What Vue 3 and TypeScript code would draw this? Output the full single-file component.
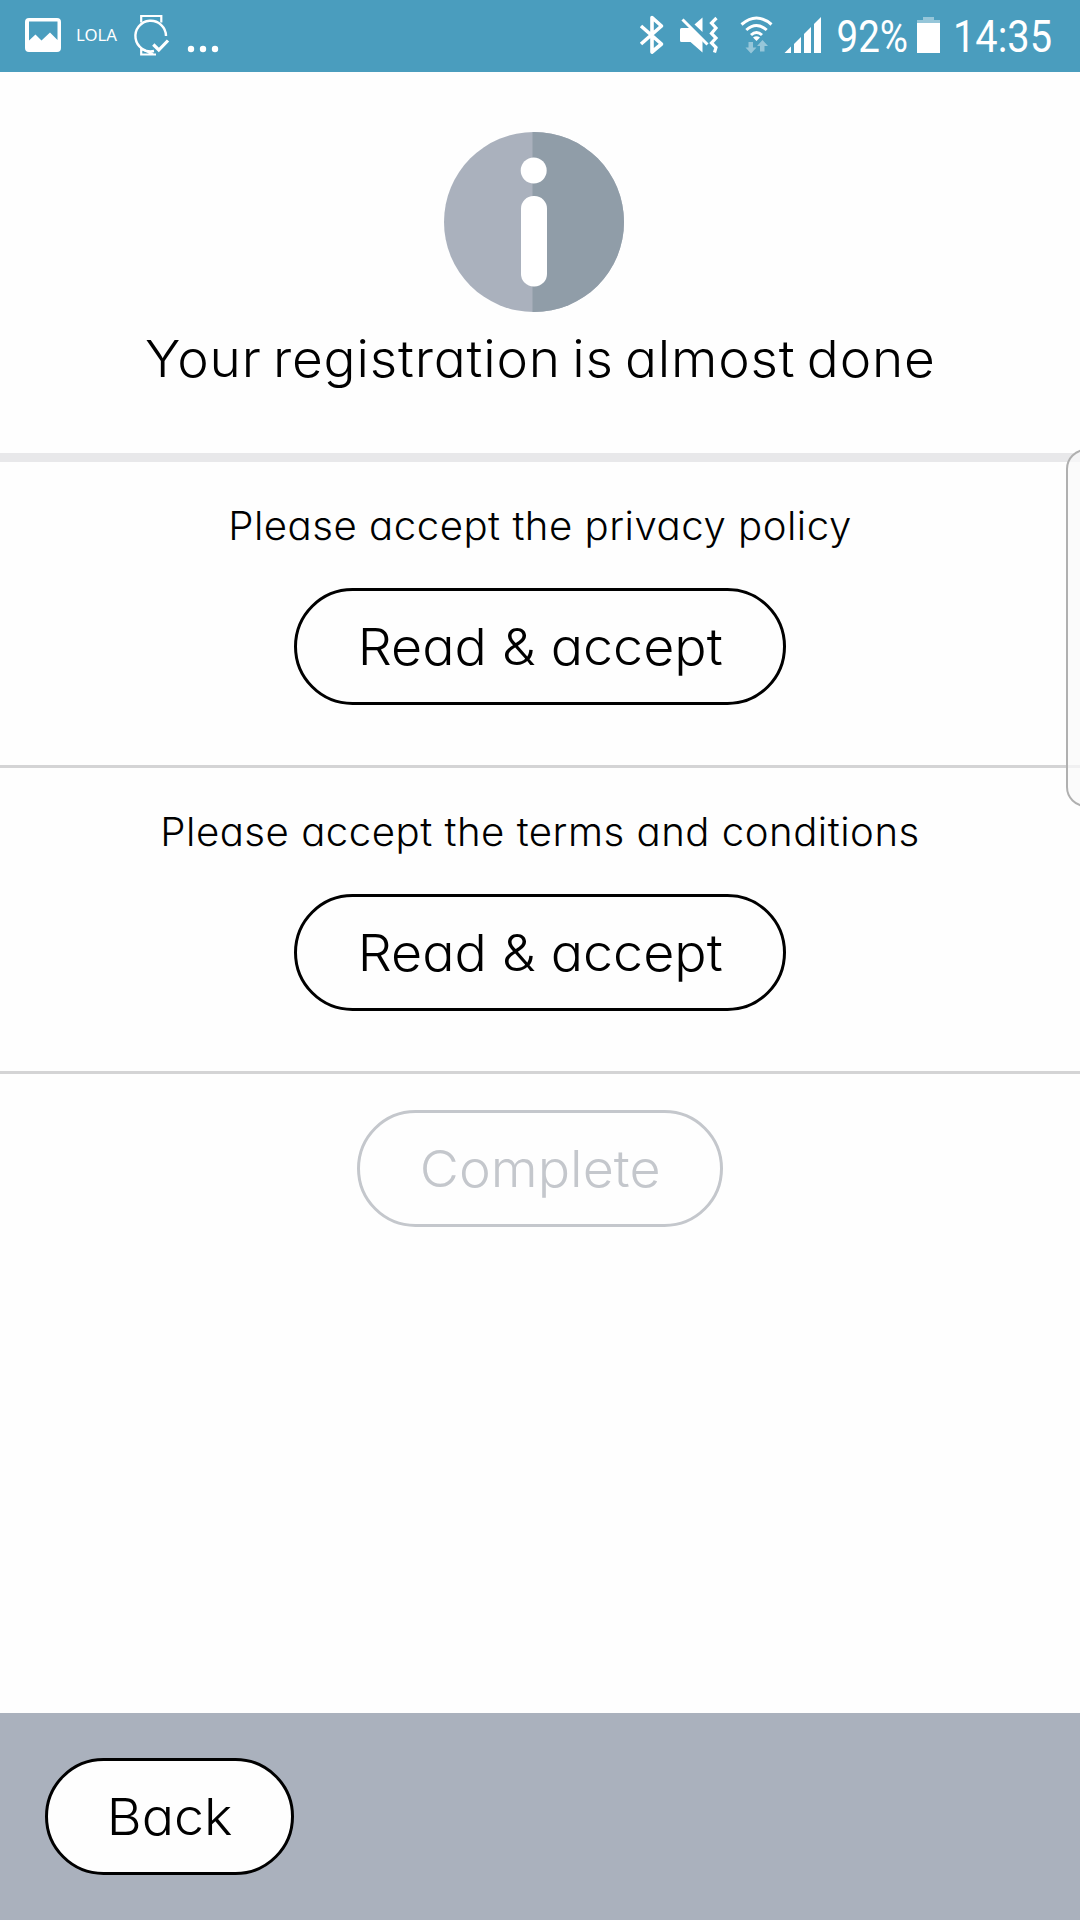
<script setup lang="ts">
interface Consent {
  id: string
  label: string
}

const consents: Consent[] = [
  { id: 'privacy', label: 'Please accept the privacy policy' },
  { id: 'terms', label: 'Please accept the terms and conditions' },
]
</script>

<template>
  <div class="screen">
    <header class="status">
      <svg class="status-left" width="240" height="72" viewBox="0 0 240 72">
        <path
          fill="#fff"
          fill-rule="evenodd"
          d="M29 18H57a4 4 0 0 1 4 4V48a4 4 0 0 1-4 4H29a4 4 0 0 1-4-4V22a4 4 0 0 1 4-4ZM29 21.5V40.5L35.500 34.500L41.500 40.500L50 32.500L57.500 40V21.500Z"
        />
        <text x="76" y="41" class="lola" textLength="41" lengthAdjust="spacingAndGlyphs">LOLA</text>
        <g fill="none" stroke="#fff" stroke-width="2.200">
          <path d="M141.200 22.500V16H161.300V22.500" />
          <path d="M141.200 48V54.500H156M141.200 49L153 54" />
          <path d="M154 51A15.300 15.300 0 1 1 166 36" stroke-width="2.400" />
          <path d="M153.300 44.500L158.800 50L168 40.500" stroke-width="3.200" />
        </g>
        <g fill="#fff">
          <circle cx="191" cy="49" r="3.200" />
          <circle cx="203" cy="49" r="3.200" />
          <circle cx="215" cy="49" r="3.200" />
        </g>
      </svg>
      <svg class="status-right" width="460" height="72" viewBox="620 0 460 72">
        <path
          d="M641 26L661.500 44L652 52V17.500L661.500 26L641 44"
          fill="none"
          stroke="#fff"
          stroke-width="3.600"
          stroke-linejoin="round"
        />
        <g fill="#fff">
          <path d="M681.500 28H690L702.500 40V52.500L690.500 42H681.500a1.500 1.500 0 0 1-1.500-1.500V29.500a1.500 1.500 0 0 1 1.500-1.500Z" />
          <path d="M694.500 24.500L702.500 17.500V32Z" />
        </g>
        <path d="M682.500 19.500L707.500 44.500" stroke="#fff" stroke-width="3" />
        <path
          d="M716.500 18L711.500 23L716 28L711.500 33.500L716 38L711.500 43L716 47.500L714.500 52.500"
          fill="none"
          stroke="#fff"
          stroke-width="3.200"
        />
        <g fill="none" stroke="#fff" stroke-width="3">
          <path d="M741.500 24.500Q756.500 11.500 771.500 24.500" />
          <path d="M746.300 30Q756.500 21 766.700 30" />
          <path d="M751 35Q756.500 30 762 35" />
        </g>
        <path d="M753 37.500Q756.500 35 760 37.500L756.500 41Z" fill="#fff" />
        <g fill="#fff" opacity=".42">
          <path d="M748.500 42H753V47.500H756.500L751 53.500L745.500 47.500H748.500Z" />
          <path d="M760 51.500H764.500V46H768L762.500 40L757 46H760Z" />
        </g>
        <g fill="#fff">
          <path d="M784.500 53L791 46.500V53Z" />
          <path d="M794 53V44L801 37V53Z" />
          <path d="M804 53V34L811 27V53Z" />
          <path d="M814 53V24L821 17V53Z" />
        </g>
        <text x="836.500" y="52" class="digits" textLength="71.500" lengthAdjust="spacingAndGlyphs">92%</text>
        <path d="M923 17H934V20H940V23H917V20H923Z" fill="#fff" opacity=".42" />
        <path d="M917 23H940V53H917Z" fill="#fff" />
        <text x="953" y="52" class="digits" textLength="99" lengthAdjust="spacingAndGlyphs">14:35</text>
      </svg>
    </header>

    <section class="hero">
      <svg class="info" width="180" height="180" viewBox="0 0 180 180">
        <circle cx="90" cy="90" r="90" fill="#aab1bd" />
        <path d="M88.500 0H90A90 90 0 0 1 90 180H88.500Z" fill="#909da8" />
        <circle cx="89.700" cy="38.500" r="13" fill="#fff" />
        <rect x="77" y="64" width="26" height="90.500" rx="12.500" fill="#fff" />
      </svg>
      <h1>Your registration is almost done</h1>
    </section>

    <section v-for="item in consents" :key="item.id" class="consent">
      <p :class="item.id">{{ item.label }}</p>
      <button class="pill read" type="button"><span>Read &amp; accept</span></button>
    </section>

    <section class="finish">
      <button class="pill complete" type="button" disabled><span>Complete</span></button>
    </section>

    <footer>
      <button class="pill back" type="button"><span>Back</span></button>
    </footer>

    <div class="edge-handle"></div>
  </div>
</template>

<style>
body {
  margin: 0;
}
</style>

<style scoped>
.screen {
  position: relative;
  display: flex;
  flex-direction: column;
  width: 1080px;
  height: 1920px;
  overflow: hidden;
  background: #fefefe;
  color: #000;
  font-family: Inter, "Liberation Sans", sans-serif;
  font-weight: 270;
  font-feature-settings: "cv11" 1;
}

.status {
  display: flex;
  justify-content: space-between;
  flex: none;
  height: 72px;
  background: #4a9dbe;
}

.lola {
  font: 400 17px "Noto Sans", sans-serif;
  fill: #fff;
}

.digits {
  font: 400 45px Roboto, sans-serif;
  fill: #fff;
}

.hero {
  box-sizing: border-box;
  display: flex;
  flex-direction: column;
  align-items: center;
  flex: none;
  height: 390px;
  padding-top: 60px;
  border-bottom: 9px solid #e8e8ea;
}

.info {
  flex: none;
  margin-right: 12px;
}

h1 {
  margin: 17px 0 0;
  font-size: 51px;
  font-weight: inherit;
  line-height: 60px;
  letter-spacing: 0.8px;
  word-spacing: -4.300px;
  white-space: nowrap;
  transform: scaleX(1.042);
}

.consent {
  box-sizing: border-box;
  display: flex;
  flex-direction: column;
  align-items: center;
  flex: none;
  height: 306px;
  padding-top: 39px;
  border-bottom: 3px solid #d4d4d5;
}

p {
  margin: 0 0 37px;
  font-size: 39px;
  line-height: 50px;
  letter-spacing: 0.5px;
  white-space: nowrap;
  transform: scaleX(1.029);
}

.pill {
  box-sizing: border-box;
  display: flex;
  align-items: center;
  justify-content: center;
  flex: none;
  height: 117px;
  padding: 0;
  border: 3px solid #000;
  border-radius: 59px;
  background: #fefefe;
  color: #000;
  font: inherit;
  font-feature-settings: inherit;
  font-size: 51px;
  white-space: nowrap;
}

.pill span {
  transform: scaleX(1.054);
}

.read {
  width: 492px;
}

.finish {
  display: flex;
  justify-content: center;
  flex: 1;
  padding-top: 36px;
}

.complete {
  width: 366px;
  border-color: #c4c7cc;
  color: #c4c7cc;
}

.back {
  width: 249px;
}

footer {
  box-sizing: border-box;
  flex: none;
  height: 207px;
  padding: 45px;
  background: #aab1bd;
}

.edge-handle {
  position: absolute;
  top: 449px;
  left: 1066px;
  box-sizing: border-box;
  width: 40px;
  height: 358px;
  border: 2px solid #b0b0b0;
  border-radius: 21px;
  background: rgba(249, 249, 249, 0.75);
}
</style>
